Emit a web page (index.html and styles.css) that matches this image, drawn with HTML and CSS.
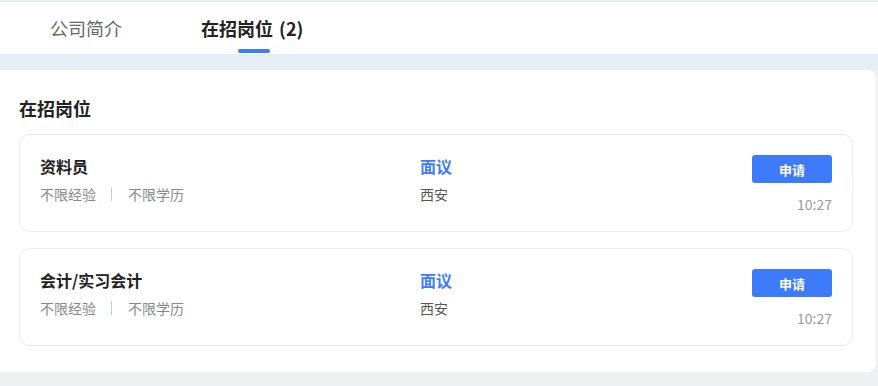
FILE: index.html
```html
<!DOCTYPE html>
<html>
<head>
    <meta charset="utf-8">
    <title>在招岗位</title>
    <link rel="stylesheet" href="styles.css">
</head>
<body>
    <div class="topline"></div>
    <div class="tabs">
        <div class="tab">公司简介</div>
        <div class="tab active">在招岗位 (2)</div>
    </div>
    <div class="band"></div>

    <div class="panel">
        <h2>在招岗位</h2>

        <div class="job">
            <div class="job-main">
                <div class="job-title">资料员</div>
                <div class="job-tags">
                    <span>不限经验</span>
                    <span class="sep"></span>
                    <span>不限学历</span>
                </div>
            </div>
            <div class="job-mid">
                <div class="salary">面议</div>
                <div class="city">西安</div>
            </div>
            <div class="job-side">
                <button class="apply">申请</button>
                <div class="time">10:27</div>
            </div>
        </div>

        <div class="job">
            <div class="job-main">
                <div class="job-title">会计/实习会计</div>
                <div class="job-tags">
                    <span>不限经验</span>
                    <span class="sep"></span>
                    <span>不限学历</span>
                </div>
            </div>
            <div class="job-mid">
                <div class="salary">面议</div>
                <div class="city">西安</div>
            </div>
            <div class="job-side">
                <button class="apply">申请</button>
                <div class="time">10:27</div>
            </div>
        </div>
    </div>
</body>
</html>
```

FILE: styles.css
```css
:root {
    --blue: #3e7bfb;
    --band: #e6eef6;
    --text: #222;
    --muted: #888;
}

body {
    margin: 0;
    background: #eff0f2;
    font-family: "Noto Sans CJK SC", "Noto Sans", sans-serif;
    color: var(--text);
}

.topline {
    height: 2px;
    background: var(--band);
}

.tabs {
    height: 52px;
    background: #fff;
    display: flex;
    align-items: center;
    gap: 79px;
    padding-left: 50px;
}

.tab {
    position: relative;
    font-size: 18px;
    line-height: 24px;
    color: #666;
}

.tab.active {
    font-weight: bold;
    color: var(--text);
    word-spacing: 2px;
}

.tab.active::after {
    content: '';
    position: absolute;
    left: 50%;
    bottom: -13px;
    width: 32px;
    height: 4px;
    margin-left: -14px;
    border-radius: 2px;
    background: var(--blue);
}

.band {
    height: 16px;
    background: var(--band);
}

.panel {
    width: 876px;
    box-sizing: border-box;
    background: #fff;
    border-radius: 0 9px 9px 0;
    padding: 25px 23px 26px 19px;
}

h2 {
    margin: 0 0 13px;
    font-size: 18px;
    line-height: 26px;
    font-weight: bold;
}

.job {
    display: flex;
    border: 1px solid #ececec;
    border-radius: 11px;
    padding: 20px 20px 17px 20px;
}

.job + .job {
    margin-top: 16px;
}

.job-main {
    width: 380px;
    flex: none;
}

.job-title {
    font-size: 16px;
    line-height: 22px;
    font-weight: bold;
}

.job-tags {
    margin-top: 7px;
    font-size: 14px;
    line-height: 20px;
    color: var(--muted);
    display: flex;
    align-items: center;
}

.sep {
    width: 1px;
    height: 14px;
    background: #bccde4;
    margin: 0 16px 0 15px;
}

.job-mid {
    flex: 1;
}

.salary {
    font-size: 16px;
    line-height: 22px;
    font-weight: bold;
    color: var(--blue);
}

.city {
    margin-top: 7px;
    font-size: 14px;
    line-height: 20px;
    color: #555;
}

.job-side {
    display: flex;
    flex-direction: column;
    align-items: flex-end;
}

.apply {
    width: 80px;
    height: 28px;
    border: none;
    border-radius: 3px;
    background: var(--blue);
    color: #fff;
    font-family: inherit;
    font-size: 13px;
    font-weight: bold;
    cursor: pointer;
}

.time {
    margin-top: 11px;
    font-size: 14px;
    line-height: 20px;
    color: #999;
}
```
